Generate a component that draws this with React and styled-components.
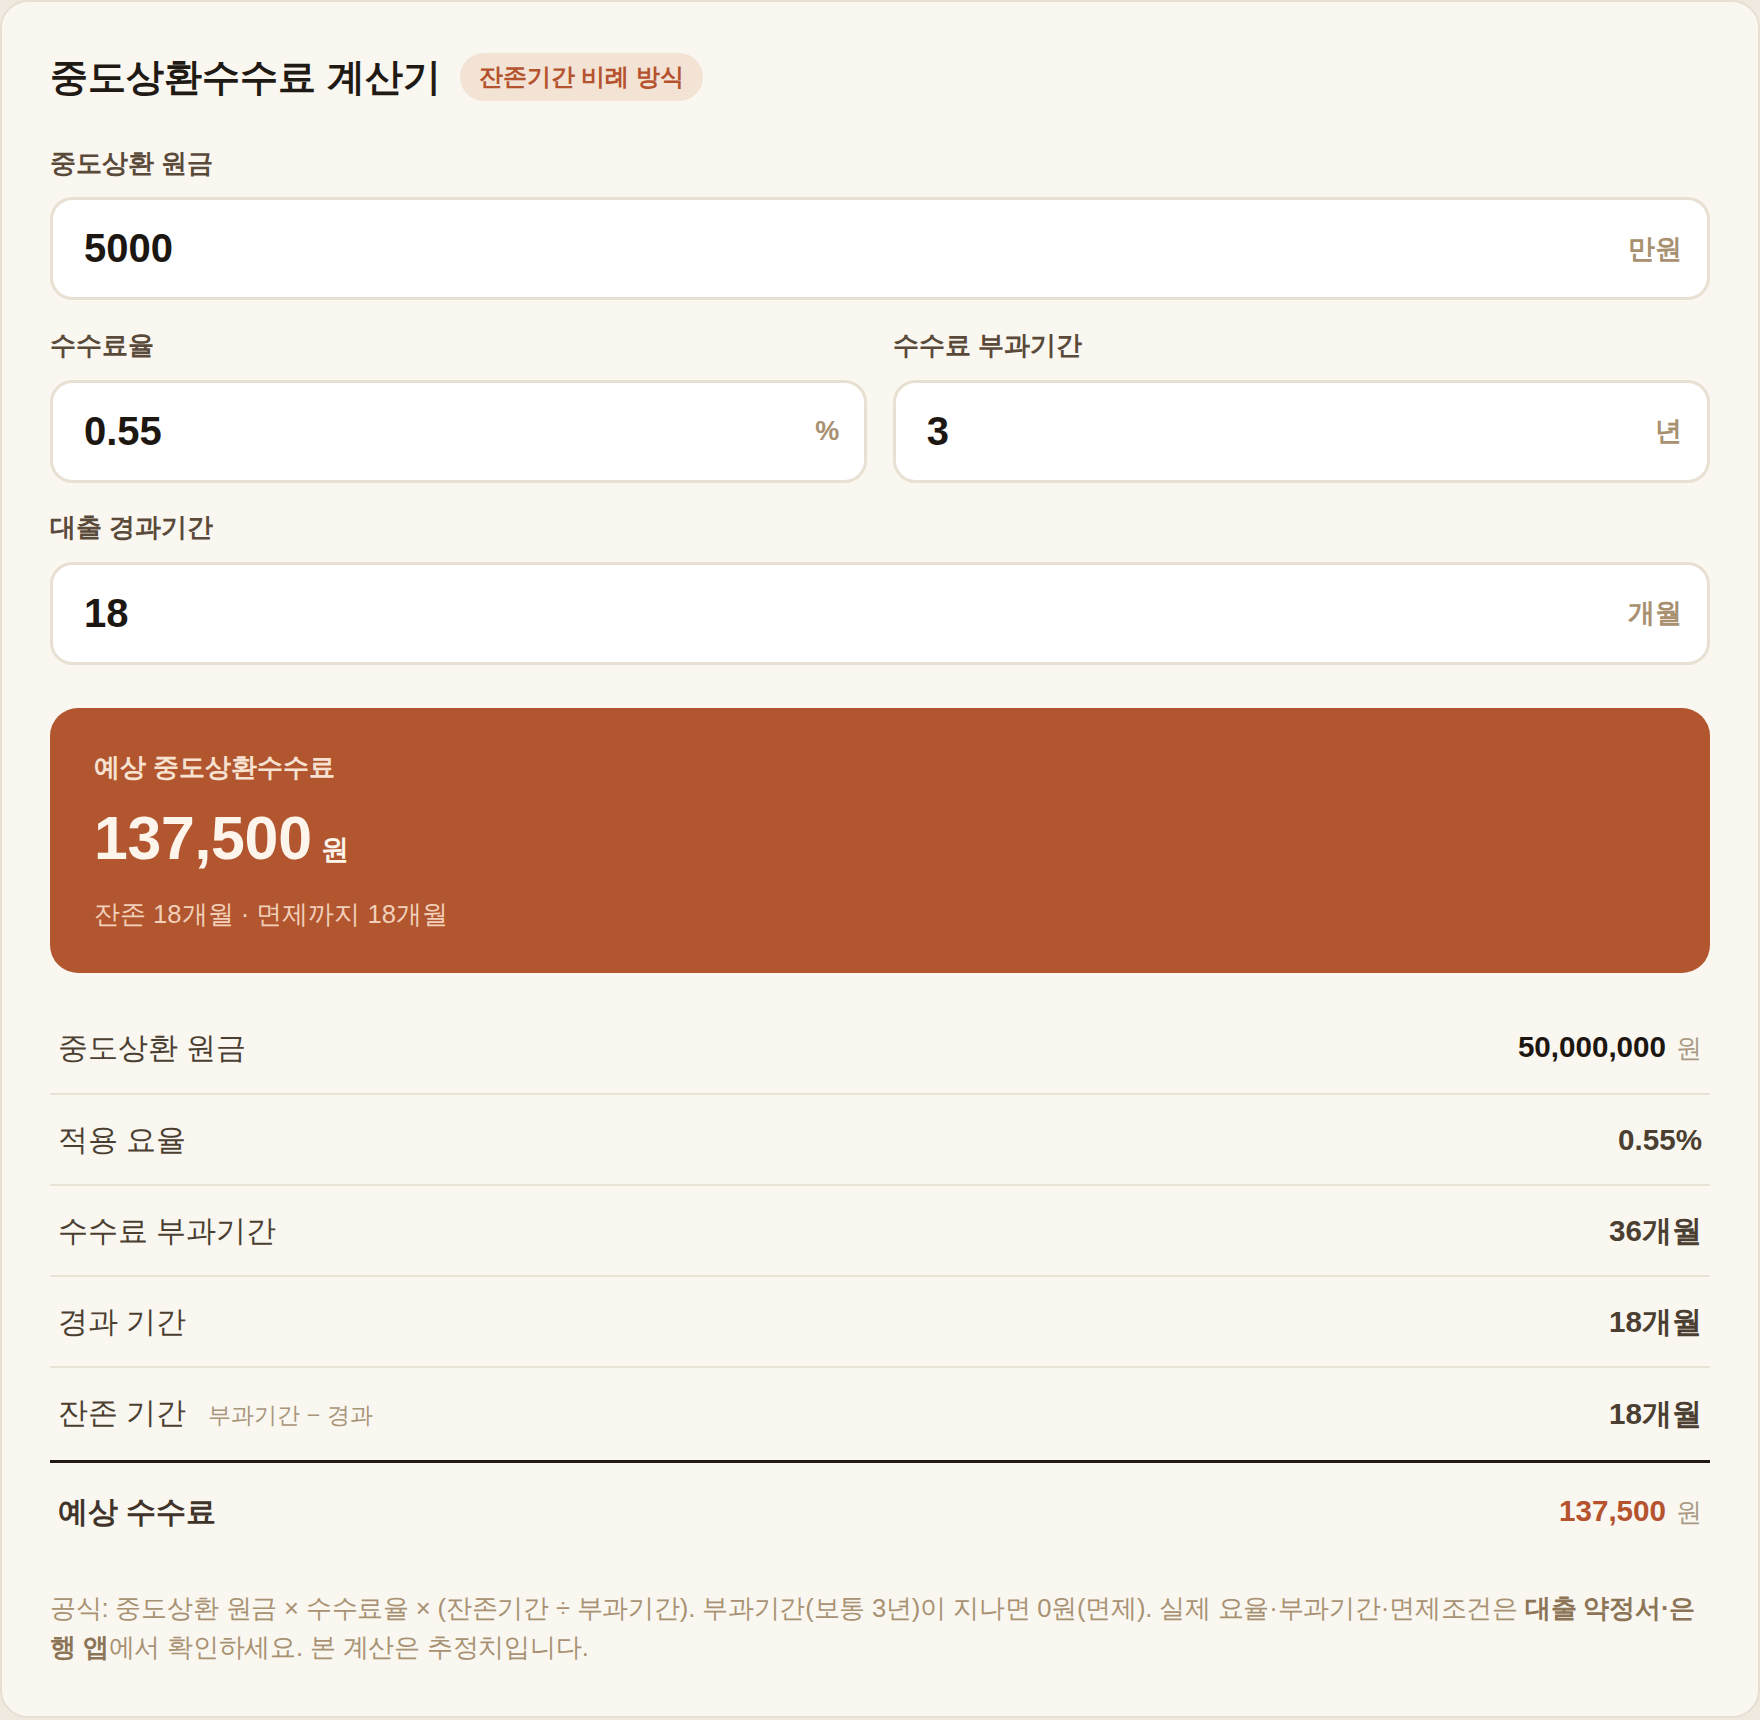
import React from "react";
import styled, { createGlobalStyle } from "styled-components";

const FONT = `"Liberation Sans", sans-serif`;

const Global = createGlobalStyle`
  * { box-sizing: border-box; }
  html, body { margin: 0; padding: 0; background: #efe9df; }
  body { font-family: ${FONT}; }
`;

const Card = styled.div`
  background: #faf7f1;
  border: 2px solid #e6dfd2;
  border-radius: 28px;
  padding: 48px;
  display: flex;
  flex-direction: column;
  gap: 28.8px;
`;

const Header = styled.div`
  display: flex;
  align-items: center;
  gap: 19px;
  margin-bottom: 14px;
`;

const Title = styled.h1`
  margin: 0;
  font-size: 38.4px;
  line-height: 1.4;
  font-weight: 700;
  color: #1f1a14;
`;

const Badge = styled.span`
  display: inline-flex;
  align-items: center;
  height: 48px;
  padding: 0 19px;
  border-radius: 999px;
  background: #f3e3d5;
  color: #b5532f;
  font-size: 24px;
  font-weight: 700;
`;

const Field = styled.div`
  display: flex;
  flex-direction: column;
  gap: 17px;
  min-width: 0;
`;

const Label = styled.label`
  font-size: 25.6px;
  line-height: 33.6px;
  font-weight: 700;
  color: #5a4a3a;
`;

const InputBox = styled.div`
  display: flex;
  align-items: center;
  height: 103px;
  padding: 0 25px 0 31px;
  background: #ffffff;
  border: 3.2px solid #e8e0d2;
  border-radius: 22.4px;
`;

const Input = styled.input`
  flex: 1;
  min-width: 0;
  border: none;
  outline: none;
  background: transparent;
  padding: 0;
  font-family: ${FONT};
  font-size: 40px;
  font-weight: 700;
  color: #1d1711;
`;

const Unit = styled.span`
  font-size: 27px;
  font-weight: 700;
  color: #a89070;
`;

const Row2 = styled.div`
  display: grid;
  grid-template-columns: 1fr 1fr;
  gap: 25.6px;
`;

const Result = styled.section`
  margin-top: 14px;
  background: #b1562f;
  border-radius: 28px;
  padding: 42px 44px 42px;
  display: flex;
  flex-direction: column;
`;

const ResultLabel = styled.div`
  font-size: 25.6px;
  line-height: 1.4;
  font-weight: 700;
  color: #f7e2d1;
`;

const ResultValue = styled.div`
  margin-top: 19px;
  display: flex;
  align-items: baseline;
  gap: 9px;
  color: #fdf4ec;
  font-weight: 700;
  line-height: 67px;
`;

const BigNum = styled.span`
  font-size: 60.8px;
  letter-spacing: -0.005em;
`;

const BigUnit = styled.span`
  font-size: 28px;
`;

const ResultSub = styled.div`
  margin-top: 15px;
  font-size: 25.6px;
  line-height: 33.6px;
  color: #f2cfb9;
`;

const Table = styled.div`
  display: flex;
  flex-direction: column;
`;

const Row = styled.div`
  display: flex;
  justify-content: space-between;
  align-items: center;
  padding: ${(p) => (p.$total ? "25px 8px" : "22px 8px")};
  line-height: 45px;
  border-bottom: ${(p) =>
    p.$total ? "none" : p.$strong ? "3.2px solid #221a13" : "2px solid #e9e3d6"};
`;

const RowLabel = styled.div`
  font-size: 29.6px;
  font-weight: ${(p) => (p.$bold ? 700 : 400)};
  color: ${(p) => (p.$bold ? "#40342a" : "#4b3f31")};
  display: flex;
  align-items: baseline;
`;

const Note = styled.span`
  margin-left: 22px;
  font-size: 23.2px;
  color: #a8957a;
`;

const RowValue = styled.div`
  font-size: 29.6px;
  font-weight: 700;
  color: ${(p) => p.$color || "#4b3f31"};
  display: flex;
  align-items: baseline;
`;

const Won = styled.span`
  margin-left: 10px;
  font-size: 25.6px;
  font-weight: 400;
  color: #a89a84;
`;

const Footer = styled.p`
  margin: 0;
  font-size: 25.6px;
  line-height: 39.6px;
  letter-spacing: -0.2px;
  color: #a89273;
  b {
    color: #8c7557;
    font-weight: 700;
  }
`;

export default function App() {
  return (
    <>
      <Global />
      <Card>
        <Header>
          <Title>중도상환수수료 계산기</Title>
          <Badge>잔존기간 비례 방식</Badge>
        </Header>

        <Field>
          <Label>중도상환 원금</Label>
          <InputBox>
            <Input defaultValue="5000" />
            <Unit>만원</Unit>
          </InputBox>
        </Field>

        <Row2>
          <Field>
            <Label>수수료율</Label>
            <InputBox>
              <Input defaultValue="0.55" />
              <Unit>%</Unit>
            </InputBox>
          </Field>
          <Field>
            <Label>수수료 부과기간</Label>
            <InputBox>
              <Input defaultValue="3" />
              <Unit>년</Unit>
            </InputBox>
          </Field>
        </Row2>

        <Field>
          <Label>대출 경과기간</Label>
          <InputBox>
            <Input defaultValue="18" />
            <Unit>개월</Unit>
          </InputBox>
        </Field>

        <Result>
          <ResultLabel>예상 중도상환수수료</ResultLabel>
          <ResultValue>
            <BigNum>137,500</BigNum>
            <BigUnit>원</BigUnit>
          </ResultValue>
          <ResultSub>잔존 18개월 · 면제까지 18개월</ResultSub>
        </Result>

        <Table>
          <Row>
            <RowLabel>중도상환 원금</RowLabel>
            <RowValue $color="#1d1711">
              50,000,000<Won>원</Won>
            </RowValue>
          </Row>
          <Row>
            <RowLabel>적용 요율</RowLabel>
            <RowValue>0.55%</RowValue>
          </Row>
          <Row>
            <RowLabel>수수료 부과기간</RowLabel>
            <RowValue>36개월</RowValue>
          </Row>
          <Row>
            <RowLabel>경과 기간</RowLabel>
            <RowValue>18개월</RowValue>
          </Row>
          <Row $strong>
            <RowLabel>
              잔존 기간<Note>부과기간 − 경과</Note>
            </RowLabel>
            <RowValue>18개월</RowValue>
          </Row>
          <Row $total>
            <RowLabel $bold>예상 수수료</RowLabel>
            <RowValue $color="#b5532f">
              137,500<Won>원</Won>
            </RowValue>
          </Row>
        </Table>

        <Footer>
          공식: 중도상환 원금 × 수수료율 × (잔존기간 ÷ 부과기간). 부과기간(보통 3년)이 지나면 0원(면제). 실제
          요율·부과기간·면제조건은 <b>대출 약정서·은행 앱</b>에서 확인하세요. 본 계산은 추정치입니다.
        </Footer>
      </Card>
    </>
  );
}
